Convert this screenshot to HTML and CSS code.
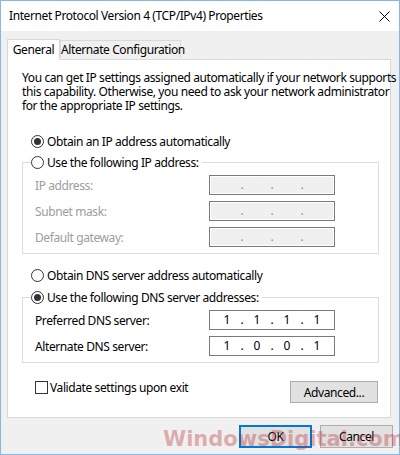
FILE: index.html
```html
<!DOCTYPE html>
<html>
<head>
<meta charset="utf-8">
<link rel="stylesheet" href="styles.css">
</head>
<body>
<div class="window">
  <div class="titlebar">
    <span class="title">Internet Protocol Version 4 (TCP/IPv4) Properties</span>
    <svg class="close" width="11" height="11" viewBox="0 0 11 11"><path d="M0.5 0.5 L10.5 10.5 M10.5 0.5 L0.5 10.5" stroke="#000" stroke-width="1" fill="none"/></svg>
  </div>
  <div class="content">
    <div class="tabs">
      <div class="tab active">General</div>
      <div class="tab">Alternate Configuration</div>
    </div>
    <div class="panel">
      <p class="intro">You can get IP settings assigned automatically if your network supports<br>this capability. Otherwise, you need to ask your network administrator<br>for the appropriate IP settings.</p>
      <div class="option first"><span class="radio checked"></span><span>Obtain an IP address automatically</span></div>
      <div class="group">
        <div class="legend"><span class="radio"></span><span>Use the following IP address:</span></div>
        <div class="rows">
          <div class="row disabled"><span class="lbl">IP address:</span><div class="ip"><span class="oct"></span><span class="dot">.</span><span class="oct"></span><span class="dot">.</span><span class="oct"></span><span class="dot">.</span><span class="oct"></span></div></div>
          <div class="row disabled"><span class="lbl">Subnet mask:</span><div class="ip"><span class="oct"></span><span class="dot">.</span><span class="oct"></span><span class="dot">.</span><span class="oct"></span><span class="dot">.</span><span class="oct"></span></div></div>
          <div class="row disabled"><span class="lbl">Default gateway:</span><div class="ip"><span class="oct"></span><span class="dot">.</span><span class="oct"></span><span class="dot">.</span><span class="oct"></span><span class="dot">.</span><span class="oct"></span></div></div>
        </div>
      </div>
      <div class="option dns"><span class="radio"></span><span>Obtain DNS server address automatically</span></div>
      <div class="group">
        <div class="legend"><span class="radio checked"></span><span>Use the following DNS server addresses:</span></div>
        <div class="rows">
          <div class="row"><span class="lbl">Preferred DNS server:</span><div class="ip"><span class="oct">1</span><span class="dot">.</span><span class="oct">1</span><span class="dot">.</span><span class="oct">1</span><span class="dot">.</span><span class="oct">1</span></div></div>
          <div class="row"><span class="lbl">Alternate DNS server:</span><div class="ip"><span class="oct">1</span><span class="dot">.</span><span class="oct">0</span><span class="dot">.</span><span class="oct">0</span><span class="dot">.</span><span class="oct">1</span></div></div>
        </div>
      </div>
      <div class="bottom">
        <div class="check"><span class="box"></span><span>Validate settings upon exit</span></div>
        <button class="btn adv">Advanced...</button>
      </div>
    </div>
    <div class="footer">
      <button class="btn ok">OK</button>
      <button class="btn">Cancel</button>
    </div>
  </div>
  <div class="watermark">WindowsDigital.com</div>
</div>
</body>
</html>
```

FILE: styles.css
```css
* { box-sizing: border-box; }
html, body { margin: 0; padding: 0; }
body {
  width: 400px;
  height: 455px;
  font-family: "Noto Sans", "Open Sans", sans-serif;
  font-size: 12px;
  letter-spacing: -0.4px;
  color: #000;
  overflow: hidden;
}
.window {
  position: relative;
  width: 400px;
  height: 455px;
  border: 1px solid #86b7e8;
  background: #f0f0f0;
  display: flex;
  flex-direction: column;
}
.titlebar {
  height: 30px;
  background: #fff;
  display: flex;
  align-items: center;
  justify-content: space-between;
  padding: 0 9px 0 8px;
}
.title { font-size: 12px; line-height: 14px; }
.close { display: block; margin-top: 1px; }
.content {
  flex: 1;
  padding-top: 7px;
  padding-left: 6px;
}
.tabs {
  display: flex;
  align-items: flex-end;
  height: 21px;
}
.tab {
  width: 121px;
  height: 18px;
  margin-bottom: 1px;
  border: 1px solid #d9d9d9;
  border-bottom: none;
  background: #f0f0f0;
  text-align: center;
  line-height: 17px;
  white-space: nowrap;
}
.tab.active {
  position: relative;
  z-index: 1;
  width: 53px;
  height: 21px;
  margin-bottom: -1px;
  background: #fff;
  line-height: 19px;
}
.panel {
  width: 384px;
  height: 359px;
  border: 1px solid #d9d9d9;
  background: #fff;
  padding: 11px 0 0 14px;
}
.intro {
  margin: 0;
  line-height: 14px;
  white-space: nowrap;
}
.option, .legend, .check {
  display: flex;
  align-items: center;
  height: 13px;
  line-height: 13px;
  white-space: nowrap;
}
.option { margin-left: 9px; }
.option.first { margin-top: 22px; }
.option.dns { margin-top: 15px; }
.radio {
  width: 13px;
  height: 13px;
  border: 1px solid #333;
  border-radius: 50%;
  background: #fff;
  margin-right: 3px;
  flex: none;
  display: flex;
  align-items: center;
  justify-content: center;
}
.radio.checked::after {
  content: "";
  width: 7px;
  height: 7px;
  border-radius: 50%;
  background: #333;
}
.group {
  width: 357px;
  border: 1px solid #dcdcdc;
  margin-top: 14px;
  padding: 0 0 6px 12px;
}
.option.dns + .group { margin-top: 15px; }
.legend {
  margin-top: -7px;
  margin-left: -4px;
  padding-right: 3px;
  background: #fff;
  width: max-content;
}
.rows {
  margin-top: 6px;
  display: flex;
  flex-direction: column;
  gap: 6px;
}
.row {
  display: flex;
  align-items: center;
  height: 20px;
}
.lbl { width: 174px; }
.row.disabled .lbl { color: #9d9d9d; }
.ip {
  width: 126px;
  height: 20px;
  border: 1px solid #7a7a7a;
  background: #fff;
  display: flex;
  align-items: center;
  padding-left: 5px;
  line-height: 18px;
  letter-spacing: 0;
}
.row.disabled .ip {
  background: #f0f0f0;
  box-shadow: inset 0 0 0 1px #fff;
  color: #8a8aa0;
}
.oct { width: 24px; text-align: center; }
.dot { width: 6px; text-align: center; }
.bottom {
  width: 357px;
  margin-top: 18px;
  display: flex;
  justify-content: space-between;
  align-items: flex-start;
}
.check { margin-left: 13px; }
.box {
  width: 13px;
  height: 13px;
  border: 1px solid #333;
  background: #fff;
  margin-right: 2px;
  flex: none;
}
.btn {
  font-family: inherit;
  font-size: 12px;
  letter-spacing: inherit;
  color: #000;
  background: #e1e1e1;
  border: 1px solid #adadad;
  padding: 0;
  margin: 0;
  line-height: 19px;
}
.adv { width: 88px; height: 22px; margin-right: 1px; }
.footer {
  display: flex;
  justify-content: flex-end;
  gap: 8px;
  padding-right: 6px;
  margin-top: 7px;
}
.footer .btn { width: 73px; height: 23px; }
.btn.ok { border: 2px solid #0078d7; }
.watermark {
  position: absolute;
  left: 162px;
  top: 425px;
  font-family: "DejaVu Sans", sans-serif;
  font-weight: bold;
  font-size: 21px;
  line-height: 26px;
  letter-spacing: 0;
  color: rgba(185, 40, 50, 0.36);
  white-space: nowrap;
  pointer-events: none;
}
```
